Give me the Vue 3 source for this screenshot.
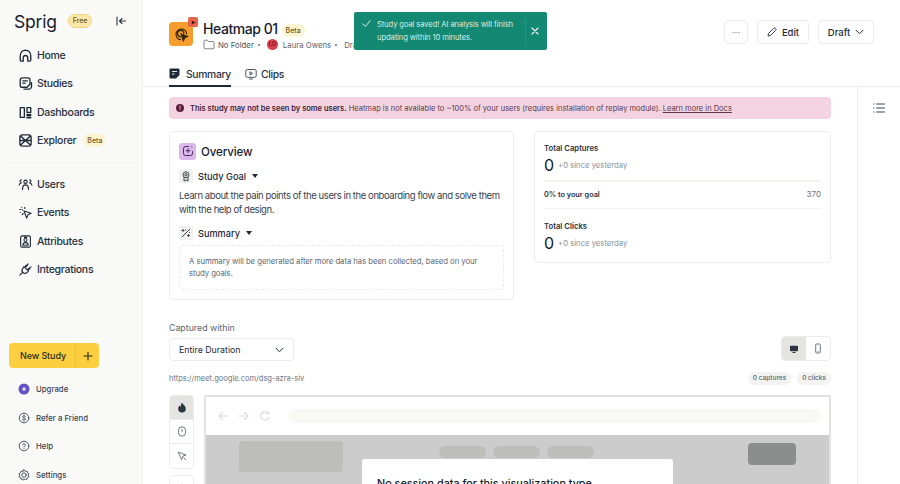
<script setup>
const topNav = [
  { label: 'Home', d: 'M3 10.500 C3 6 6 3 10 3 s7 3 7 7.500 V16 a1.500 1.500 0 0 1-1.500 1.500 H13 V13 a3 3 0 0 0-6 0 v4.500 H4.500 A1.500 1.500 0 0 1 3 16 Z' },
  { label: 'Studies', d: 'M5.500 2.500 h8 A2.500 2.500 0 0 1 16 5 V11 l-4 4 H5.500 A2.500 2.500 0 0 1 3 12.500 v-7.500 A2.500 2.500 0 0 1 5.500 2.500 Z M6.500 6.500 h6 M6.500 9.500 h3 M18 9 v5 a3.500 3.500 0 0 1-3.500 3.500 H8' },
  { label: 'Dashboards', d: 'M3 3.500 h5.500 v13 h-5.500 Z M12 3.500 h5 v6.500 h-5 Z M12 13 h5 v1 h-5 Z M12 16.500 h5 v.5 h-5 Z' },
  { label: 'Explorer', beta: true, d: 'M6 2.500 h8 a3.500 3.500 0 0 1 3.500 3.500 v8 a3.500 3.500 0 0 1-3.500 3.500 H6 a3.500 3.500 0 0 1-3.500-3.500 V6 a3.500 3.500 0 0 1 3.500-3.500 Z M3.500 4 L16.500 16 M16.500 4 L3.500 16 M3 10 h14' },
]
const midNav = [
  { label: 'Users', d: 'M10 8.500 a2.200 2.200 0 1 0 0-4.400 a2.200 2.200 0 0 0 0 4.400 Z M6 16.500 c0-3.500 1.500-6 4-6 s4 2.500 4 6 M4.500 7 a1.700 1.700 0 1 1 0-3.400 M1.500 11 c.3-1.600 1.300-2.600 2.500-2.600 M15.500 7 a1.700 1.700 0 1 0 0-3.400 M18.500 11 c-.3-1.600-1.300-2.600-2.500-2.600' },
  { label: 'Events', d: 'M8 8 L17.500 11 L13.500 13 L11.500 17.500 Z M5 3 v.1 M9 3 v1.500 M2.500 6 h1.500 M3 10 h.1 M6 6.500 h.1 M5.500 13 l1.500-1.500' },
  { label: 'Attributes', d: 'M5.500 2.500 h9 a2 2 0 0 1 2 2 v11 a2 2 0 0 1-2 2 h-9 a2 2 0 0 1-2-2 v-11 a2 2 0 0 1 2-2 Z M10 10 a2 2 0 1 0 0-4 a2 2 0 0 0 0 4 Z M6.500 15 c0-2.200 1.500-3.500 3.500-3.500 s3.500 1.300 3.500 3.500 Z M8.500 4.500 h3' },
  { label: 'Integrations', d: 'M2.500 17.500 L6.500 13.500 M8 6 L14 12 L12 14 a4 4 0 0 1-5.500 0 a4 4 0 0 1 0-5.500 Z M11 4 L9.500 7 M16 9 L13 10.500 M13.500 2.500 L11.500 6 M17.500 6.500 L14 8.500' },
]
const footNav = ['Upgrade', 'Refer a Friend', 'Help', 'Settings']
</script>

<template>
  <div class="app">
    <aside class="side">
      <div class="brand">
        <span class="logo">Sprig</span>
        <span class="free">Free</span>
        <svg class="collapse" width="12" height="12" viewBox="0 0 12 12" fill="none" stroke="#2b3440" stroke-width="1.100" stroke-linecap="round" stroke-linejoin="round"><path d="M2 2v8M10.500 6H4.500M7 3.500 4.500 6 7 8.500" /></svg>
      </div>
      <nav class="nav">
        <a v-for="item in topNav" :key="item.label" class="nav-item">
          <svg width="15" height="15" viewBox="0 0 20 20" fill="none" stroke="#1f2a37" stroke-width="1.800" stroke-linecap="round" stroke-linejoin="round"><path :d="item.d" /></svg>
          <span>{{ item.label }}</span>
          <span v-if="item.beta" class="beta">Beta</span>
        </a>
      </nav>
      <div class="side-rule"></div>
      <nav class="nav nav-mid">
        <a v-for="item in midNav" :key="item.label" class="nav-item">
          <svg width="15" height="15" viewBox="0 0 20 20" fill="none" stroke="#1f2a37" stroke-width="1.500" stroke-linecap="round" stroke-linejoin="round"><path :d="item.d" /></svg>
          <span>{{ item.label }}</span>
        </a>
      </nav>
      <div class="new-study">
        <span class="new-label">New Study</span>
        <span class="new-plus">
          <svg width="10" height="10" viewBox="0 0 10 10" stroke="#2b2a1c" stroke-width="1.100" stroke-linecap="round"><path d="M5 1v8M1 5h8" /></svg>
        </span>
      </div>
      <nav class="foot">
        <a v-for="(label, i) in footNav" :key="label" class="foot-item">
          <svg width="12" height="12" viewBox="0 0 12 12" fill="none" stroke="#39424e" stroke-width=".9" stroke-linecap="round" stroke-linejoin="round">
            <template v-if="i === 0">
              <circle cx="6" cy="6" r="5.500" fill="#6553c4" stroke="none" />
              <path d="M6 4.500v3M4.500 6h3" stroke="#fff" stroke-width="1.200" />
            </template>
            <template v-else-if="i === 1">
              <circle cx="6" cy="6" r="4.800" />
              <path d="M7.500 4.500C7.200 3.900 6.600 3.700 6 3.700c-.9 0-1.500.4-1.500 1.100C4.500 6.300 7.600 5.600 7.600 7.200c0 .7-.7 1.100-1.600 1.100-.7 0-1.300-.3-1.600-.9M6 3v6" stroke-width=".7" />
            </template>
            <template v-else-if="i === 2">
              <circle cx="6" cy="6" r="4.800" />
              <path d="M4.700 4.800C4.800 4.100 5.300 3.700 6 3.700s1.300.5 1.300 1.200C7.300 6 6 6 6 7M6 8.400v.1" />
            </template>
            <template v-else>
              <path d="M6 .9 7.200 2.300 9 2.100 9.500 3.800 11 4.800 10.200 6.300 11 7.800 9.500 8.600 9 10.300 7.200 10 6 11.200 4.800 10 3 10.300 2.500 8.600 1 7.800 1.800 6.300 1 4.800 2.500 3.800 3 2.100 4.800 2.300Z" />
              <circle cx="6" cy="6.100" r="2.200" />
            </template>
          </svg>
          <span>{{ label }}</span>
        </a>
      </nav>
    </aside>

    <main class="main">
      <div class="toast">
        <svg width="9" height="9" viewBox="0 0 10 10" fill="none" stroke="#d9efe8" stroke-width="1.100" stroke-linecap="round" stroke-linejoin="round"><path d="M1 5.500 3.800 8.300 9 1.800" /></svg>
        <p>Study goal saved! AI analysis will finish updating within 10 minutes.</p>
        <span class="toast-close">
          <svg width="8" height="8" viewBox="0 0 8 8" stroke="#fff" stroke-width="1.100" stroke-linecap="round"><path d="M1 1l6 6M7 1 1 7" /></svg>
        </span>
      </div>

      <header class="head">
        <div class="study-icon">
          <svg width="15" height="15" viewBox="0 0 16 16" fill="none" stroke="#3a2508" stroke-width="1.300" stroke-linecap="round"><path d="M7 13.500A5.700 5.700 0 1 1 13.500 7M6.800 10.500A3.400 3.400 0 1 1 10.500 6.800" /><path d="M7.500 7.500 14.500 10 11.500 11.500 10 14.500Z" fill="#3a2508" /></svg>
          <span class="rec">
            <svg width="5" height="5" viewBox="0 0 5 5"><path d="M.8.400 4.600 2.500.8 4.600Z" fill="#4a1610" /></svg>
          </span>
        </div>
        <div class="head-text">
          <div class="title-row">
            <h1>Heatmap 01</h1>
            <span class="beta beta-title">Beta</span>
          </div>
          <div class="meta">
            <svg width="12" height="11" viewBox="0 0 12 11" fill="none" stroke="#5b6470" stroke-width=".8" stroke-linejoin="round"><path d="M1 2.200A1 1 0 0 1 2 1.200h2.300l1.200 1.300H10a1 1 0 0 1 1 1v5.300a1 1 0 0 1-1 1H2a1 1 0 0 1-1-1Z" /></svg>
            <span class="folder">No Folder</span>
            <i class="dot"></i>
            <span class="avatar">LO</span>
            <span>Laura Owens</span>
            <i class="dot"></i>
            <span>Draft</span>
          </div>
        </div>
        <div class="actions">
          <button class="btn btn-more">
            <svg width="8" height="3" viewBox="0 0 8 3" fill="#4b5563"><circle cx="1" cy="1.500" r=".6" /><circle cx="4" cy="1.500" r=".6" /><circle cx="7" cy="1.500" r=".6" /></svg>
          </button>
          <button class="btn btn-edit">
            <svg width="10" height="10" viewBox="0 0 10 10" fill="none" stroke="#1f2a37" stroke-width=".9" stroke-linejoin="round"><path d="M1 9 1.500 6.500 6.800 1.200a1 1 0 0 1 1.400 0l.6.600a1 1 0 0 1 0 1.400L3.500 8.500Z" /></svg>
            Edit
          </button>
          <button class="btn btn-draft">
            Draft
            <svg width="9" height="6" viewBox="0 0 9 6" fill="none" stroke="#1f2a37" stroke-width="1" stroke-linecap="round" stroke-linejoin="round"><path d="M1 1.200 4.500 4.800 8 1.200" /></svg>
          </button>
        </div>
      </header>

      <div class="tabs">
        <a class="tab tab-on">
          <svg width="11" height="11" viewBox="0 0 11 11"><path d="M1.500.500h8a1 1 0 0 1 1 1v5.500L7 10.500H1.500a1 1 0 0 1-1-1v-8a1 1 0 0 1 1-1Z" fill="#1f2a37" /><path d="M3 3.500h5M3 6h2.500" stroke="#fff" stroke-width=".9" /></svg>
          Summary
        </a>
        <a class="tab">
          <svg width="12" height="12" viewBox="0 0 12 12" fill="none" stroke="#39424e" stroke-width=".9" stroke-linejoin="round"><rect x=".8" y="1.500" width="10.400" height="7.800" rx="1.500" /><path d="M5 3.800 7.600 5.400 5 7Z" /><path d="M4 11h4" /></svg>
          Clips
        </a>
      </div>

      <div class="body">
        <div class="content">
          <div class="banner">
            <svg width="8" height="8" viewBox="0 0 8 8"><circle cx="4" cy="4" r="4" fill="#5b1f40" /><path d="M4 2v2.400M4 5.800v.1" stroke="#f3d3df" stroke-width=".9" stroke-linecap="round" /></svg>
            <p><b>This study may not be seen by some users.</b> Heatmap is not available to ~100% of your users (requires installation of replay module). <u>Learn more in Docs</u></p>
          </div>

          <div class="cards">
            <section class="card overview">
              <div class="ov-head">
                <span class="ov-icon">
                  <svg width="12" height="12" viewBox="0 0 12 12" fill="none" stroke="#4a2a66" stroke-width="1" stroke-linecap="round"><path d="M10.500 6.500v2a2 2 0 0 1-2 2h-5a2 2 0 0 1-2-2v-5a2 2 0 0 1 2-2h3" /><path d="M6 4v3.500M4.200 5.700h3.600M9.800 1.800v.1" /></svg>
                </span>
                <h2>Overview</h2>
              </div>
              <div class="sub-head">
                <span class="sub-icon">
                  <svg width="10" height="11" viewBox="0 0 10 11" fill="none" stroke="#2b3440" stroke-width=".9"><circle cx="5" cy="3.800" r="3" /><circle cx="5" cy="3.800" r="1.200" /><path d="M3 6.500V10l2-1 2 1V6.500" /></svg>
                </span>
                <span>Study Goal</span>
                <i class="caret"></i>
              </div>
              <p class="goal">Learn about the pain points of the users in the onboarding flow and solve them with the help of design.</p>
              <div class="sub-head sub-summary">
                <span class="sub-icon">
                  <svg width="10" height="10" viewBox="0 0 10 10" fill="none" stroke="#2b3440" stroke-width=".9" stroke-linecap="round"><path d="M1.200 8.800 8.800 1.200M2 1.500v2M1 2.500h2M7.500 6.500v2M6.500 7.500h2M4.500 2h.1M8.500 4.500h.1" /></svg>
                </span>
                <span>Summary</span>
                <i class="caret"></i>
              </div>
              <p class="summary-box">A summary will be generated after more data has been collected, based on your study goals.</p>
            </section>

            <section class="card stats">
              <div class="stat">
                <h3>Total Captures</h3>
                <div class="stat-row"><strong>0</strong><span>+0 since yesterday</span></div>
              </div>
              <div class="goal-row">
                <b>0% to your goal</b>
                <span>370</span>
              </div>
              <div class="stat stat-clicks">
                <h3>Total Clicks</h3>
                <div class="stat-row"><strong>0</strong><span>+0 since yesterday</span></div>
              </div>
            </section>
          </div>

          <div class="range">
            <div>
              <label>Captured within</label>
              <div class="select">
                <span>Entire Duration</span>
                <svg width="9" height="6" viewBox="0 0 9 6" fill="none" stroke="#1f2a37" stroke-width="1" stroke-linecap="round" stroke-linejoin="round"><path d="M1 1.200 4.500 4.800 8 1.200" /></svg>
              </div>
            </div>
            <div class="device">
              <span class="device-btn device-on">
                <svg width="10" height="10" viewBox="0 0 10 10"><rect x="1" y="1.800" width="8" height="5.400" rx=".8" fill="#2b3440" /><path d="M3.500 8.500h3" stroke="#2b3440" stroke-width="1" /></svg>
              </span>
              <span class="device-btn">
                <svg width="10" height="11" viewBox="0 0 10 11" fill="none" stroke="#4b5563" stroke-width=".8"><rect x="2.700" y="1" width="4.600" height="9" rx="1" /><path d="M4.500 8.600h1" /></svg>
              </span>
            </div>
          </div>

          <div class="url-row">
            <span class="url">https://meet.google.com/dsg-azra-siv</span>
            <span class="pill">0 captures</span>
            <span class="pill">0 clicks</span>
          </div>

          <div class="viewer">
            <div class="tools">
              <div class="tool-group">
                <span class="tool tool-on">
                  <svg width="10" height="11" viewBox="0 0 10 11"><path d="M5 .500C5.400 2.200 8.800 3.600 8.800 6.700A3.800 3.800 0 0 1 1.200 6.700C1.200 5.200 2 4.200 2.800 3.500 3 4.300 3.400 4.700 3.800 4.800 3.800 3 4.200 1.500 5 .500Z" fill="#2b3440" /></svg>
                </span>
                <span class="tool">
                  <svg width="10" height="11" viewBox="0 0 10 11" fill="none" stroke="#4b5563" stroke-width=".8"><rect x="1.500" y=".8" width="7" height="9.400" rx="3.500" /><path d="M5 3v3" /></svg>
                </span>
                <span class="tool">
                  <svg width="10" height="10" viewBox="0 0 10 10" fill="none" stroke="#4b5563" stroke-width=".8" stroke-linejoin="round"><path d="M1.200 1.200 8.800 4 5.800 5.200 4.600 8.500Z" /><path d="M6.500 6.500 9 9" /></svg>
                </span>
              </div>
              <div class="tool-group">
                <span class="tool">
                  <svg width="10" height="10" viewBox="0 0 10 10" fill="none" stroke="#4b5563" stroke-width=".8"><circle cx="5" cy="5" r="3.800" /></svg>
                </span>
              </div>
            </div>
            <div class="preview">
              <div class="chrome">
                <svg width="54" height="12" viewBox="0 0 54 12" fill="none" stroke="#dcdcd9" stroke-width="1.100" stroke-linecap="round" stroke-linejoin="round"><path d="M9.500 6H1M4.500 2.500 1 6l3.500 3.500M21.500 6H30M26.500 2.500 30 6l-3.500 3.500M50 3.200A4.200 4.200 0 1 0 51 7M50.500 1v2.800h-2.800" /></svg>
                <span class="address"></span>
              </div>
              <div class="stage">
                <div class="skeleton">
                  <span class="sk-logo"></span>
                  <span class="sk-links"><i></i><i></i><i></i></span>
                  <span class="sk-cta"></span>
                </div>
                <div class="empty-card">No session data for this visualization type</div>
              </div>
            </div>
          </div>
        </div>
        <div class="rail">
          <svg width="12" height="10" viewBox="0 0 12 10" stroke="#3a4450" stroke-width="1" stroke-linecap="round"><path d="M3.500 1h8M3.500 5h8M3.500 9h8M.6 1h.4M.6 5h.4M.6 9h.4" /></svg>
        </div>
      </div>
    </main>
  </div>
</template>

<style>
html, body { margin: 0; overflow: hidden; }
</style>

<style scoped>
* { box-sizing: border-box; }
h1, h2, h3, p { margin: 0; }
svg { display: block; flex: none; }

.app {
  display: flex;
  width: 900px;
  height: 484px;
  overflow: hidden;
  background: #fff;
  color: #1f2a37;
  font-family: Inter, "Liberation Sans", sans-serif;
}

.side {
  flex: 0 0 143px;
  display: flex;
  flex-direction: column;
  overflow: hidden;
  background: #f9f9f8;
  border-right: 1px solid #efefed;
}
.side > * { flex: none; }
.brand {
  display: flex;
  align-items: center;
  height: 28px;
  margin-top: 7px;
  padding-left: 14px;
}
.logo {
  width: 54px;
  font-size: 17.500px;
  font-weight: 400;
  letter-spacing: -.2px;
  color: #16202c;
}
.free {
  width: 24px;
  height: 14px;
  border-radius: 7px;
  background: #fce7a8;
  border: 1px solid #f5d67e;
  color: #6b5a1f;
  font-size: 7px;
  font-weight: 500;
  line-height: 12px;
  text-align: center;
}
.collapse { margin-left: 23px; }
.nav {
  display: flex;
  flex-direction: column;
  padding: 6px 0 7px 18px;
}
.nav-mid { padding-top: 7px; padding-bottom: 6px; }
.nav-item {
  display: flex;
  align-items: center;
  flex: none;
  height: 28.500px;
  font-size: 10.500px;
  font-weight: 500;
  letter-spacing: -.3px;
  color: #27313e;
}
.nav-item svg { margin-right: 4px; }
.beta {
  margin-left: 7px;
  width: 23px;
  height: 13px;
  border-radius: 7px;
  background: #fdf3d0;
  color: #6b5a1f;
  font-size: 7px;
  font-weight: 500;
  letter-spacing: 0;
  line-height: 13px;
  text-align: center;
}
.side-rule {
  height: 1px;
  margin: 0 9px;
  background: #f0f0ee;
}
.new-study {
  display: flex;
  align-items: center;
  width: 90px;
  height: 25px;
  margin: 53px 0 0 9px;
  border-radius: 4px;
  background: #fbcf3f;
  color: #2b2a1c;
  font-size: 9px;
  font-weight: 500;
  letter-spacing: -.1px;
}
.new-label { flex: 1; padding-left: 11px; }
.new-plus {
  display: flex;
  align-items: center;
  justify-content: center;
  width: 24px;
  height: 100%;
  border-left: 1px solid #f0c230;
}
.foot {
  display: flex;
  flex-direction: column;
  padding: 7px 0 0 18px;
}
.foot-item {
  display: flex;
  align-items: center;
  gap: 6px;
  flex: none;
  height: 28.500px;
  font-size: 7.800px;
  font-weight: 500;
  color: #39424e;
}

.main {
  position: relative;
  flex: 1;
  min-width: 0;
  display: flex;
  flex-direction: column;
}
.toast {
  position: absolute;
  top: 12px;
  left: 211px;
  z-index: 5;
  display: flex;
  width: 193px;
  height: 38px;
  padding-left: 8px;
  border-radius: 2px;
  background: #138872;
  color: #d9efe8;
  font-size: 7.600px;
  letter-spacing: -.1px;
  line-height: 12.500px;
}
.toast > svg { margin: 7px 6px 0 0; }
.toast p { flex: 1; padding-top: 7px; }
.toast-close {
  display: flex;
  align-items: center;
  justify-content: center;
  flex: 0 0 22px;
  margin: 5px 0;
  padding-right: 4px;
  border-left: 1px solid #2a9480;
}

.head {
  display: flex;
  flex: none;
  height: 62px;
  padding: 17px 26px 0;
}
.study-icon {
  position: relative;
  display: flex;
  align-items: center;
  justify-content: center;
  width: 24px;
  height: 24px;
  margin-top: 5px;
  border-radius: 4px;
  background: #f59e2e;
}
.rec {
  position: absolute;
  top: -5px;
  right: -5px;
  display: flex;
  align-items: center;
  justify-content: center;
  width: 10px;
  height: 10px;
  border-radius: 2px;
  background: #e8634e;
}
.head-text { margin-left: 10px; }
.title-row {
  display: flex;
  align-items: center;
  gap: 4px;
  height: 22px;
}
h1 {
  font-size: 14px;
  font-weight: 500;
  letter-spacing: -.45px;
  color: #16202c;
}
.beta-title { margin-left: 0; margin-top: 4px; }
.meta {
  display: flex;
  align-items: center;
  height: 11px;
  font-size: 7.800px;
  color: #5b6470;
}
.folder { margin-left: 3px; color: #4b5563; }
.dot {
  width: 2px;
  height: 2px;
  margin: 0 7px 0 4px;
  border-radius: 50%;
  background: #6b7280;
}
.avatar {
  width: 11px;
  height: 11px;
  margin-right: 5px;
  border-radius: 50%;
  background: #d9414f;
  color: #5a0f18;
  font-size: 5.500px;
  font-weight: 500;
  line-height: 11px;
  text-align: center;
}
.actions {
  display: flex;
  gap: 9px;
  margin-left: auto;
  padding-top: 3px;
}
.btn {
  display: flex;
  align-items: center;
  justify-content: center;
  height: 24px;
  padding: 0;
  border: 1px solid #ececea;
  border-radius: 4px;
  background: #fff;
  color: #1f2a37;
  font: 500 9.500px Inter, "Liberation Sans", sans-serif;
}
.btn-more { width: 24px; }
.btn-edit { width: 52px; gap: 5px; }
.btn-draft { width: 56px; gap: 5px; }

.tabs {
  display: flex;
  flex: none;
  gap: 14px;
  height: 25px;
  padding-left: 26px;
  border-bottom: 1px solid #ececea;
}
.tab {
  display: flex;
  align-items: center;
  gap: 4px;
  height: 25px;
  padding-bottom: 1px;
  font-size: 10.300px;
  font-weight: 500;
  letter-spacing: -.3px;
  color: #27313e;
}
.tab-on { border-bottom: 2px solid #1f2a37; padding-top: 1px; }
.tab-on svg { margin-right: 2px; }

.body { flex: 1; min-height: 0; display: flex; }
.content {
  flex: 0 0 714px;
  padding: 10px 26px 0;
}
.rail {
  flex: 1;
  padding: 16px 0 0 15px;
  border-left: 1px solid #ececea;
}
.banner {
  display: flex;
  align-items: center;
  gap: 6px;
  height: 22px;
  padding-left: 7px;
  border-radius: 4px;
  background: #f3d3df;
  color: #5b3a4c;
  font-size: 7.500px;
}
.banner b { font-weight: 600; color: #40233a; }

.cards {
  display: flex;
  align-items: flex-start;
  gap: 20px;
  margin-top: 12px;
}
.card {
  border: 1px solid #ececea;
  border-radius: 4px;
}
.overview {
  width: 345px;
  height: 169px;
  padding: 10px 9px 0;
}
.ov-head { display: flex; align-items: center; gap: 5px; height: 18px; }
.ov-icon {
  display: flex;
  align-items: center;
  justify-content: center;
  width: 17px;
  height: 17px;
  border-radius: 3px;
  background: #d9b8ea;
}
h2 { padding-top: 1px; font-size: 11.500px; font-weight: 500; letter-spacing: -.1px; color: #16202c; }
.sub-head {
  display: flex;
  align-items: center;
  gap: 5px;
  height: 14px;
  margin-top: 9px;
  font-size: 9.200px;
  font-weight: 500;
}
.sub-icon {
  display: flex;
  align-items: center;
  justify-content: center;
  width: 14px;
  height: 14px;
  border-radius: 2px;
  background: #f0f0ee;
}
.caret {
  width: 0;
  height: 0;
  margin-left: 1px;
  border-left: 3.500px solid transparent;
  border-right: 3.500px solid transparent;
  border-top: 4px solid #1f2a37;
}
.goal {
  margin-top: 6px;
  font-size: 9.500px;
  letter-spacing: -.42px;
  line-height: 14px;
  color: #39424e;
}
.sub-summary { margin-top: 9px; }
.summary-box {
  height: 45px;
  margin: 5px 0 0;
  padding: 10px 9px 0;
  border: 1px dashed #ececea;
  border-radius: 3px;
  font-size: 7.700px;
  letter-spacing: -.03px;
  line-height: 12px;
  color: #5b6470;
}
.stats {
  width: 297px;
  height: 132px;
  padding: 0 9px;
}
.stat { height: 50px; padding-top: 11px; border-bottom: 2px solid #f1f1ef; }
.stat h3 { font-size: 7.700px; font-weight: 600; line-height: 11px; color: #27313e; }
.stat-row { display: flex; align-items: center; gap: 4px; height: 20px; margin-top: 1px; }
.stat-row strong { font-size: 16px; font-weight: 400; color: #111827; }
.stat-row span { font-size: 7.700px; color: #8a9099; }
.goal-row {
  display: flex;
  justify-content: space-between;
  align-items: center;
  height: 27px;
  padding-bottom: 2px;
  border-bottom: 1px solid #f1f1ef;
  font-size: 7.300px;
}
.goal-row b { font-weight: 600; color: #27313e; }
.goal-row span { color: #6b7280; font-size: 8px; }
.stat-clicks { border: 0; padding-top: 12px; }

.range {
  display: flex;
  justify-content: space-between;
  align-items: flex-end;
  margin-top: 22px;
}
.range label { display: block; font-size: 8.800px; line-height: 12px; color: #5b6470; }
.select {
  display: flex;
  align-items: center;
  justify-content: space-between;
  width: 125px;
  height: 23px;
  margin-top: 4px;
  padding: 0 9px;
  border: 1px solid #ececea;
  border-radius: 4px;
  font-size: 8.800px;
}
.device {
  display: flex;
  height: 25px;
  border: 1px solid #ececea;
  border-radius: 4px;
  overflow: hidden;
}
.device-btn {
  display: flex;
  align-items: center;
  justify-content: center;
  width: 24px;
}
.device-on { background: #e4e4e2; }

.url-row {
  display: flex;
  align-items: center;
  gap: 6px;
  height: 13px;
  margin-top: 11px;
}
.url { margin-right: auto; font-size: 7.500px; color: #6b7280; }
.pill {
  height: 13px;
  padding: 0 5px;
  border-radius: 7px;
  background: #f3f3f1;
  color: #5b6470;
  font-size: 6.500px;
  font-weight: 500;
  line-height: 13px;
}

.viewer {
  display: flex;
  gap: 10px;
  margin-top: 10px;
}
.tools { display: flex; flex-direction: column; gap: 6px; flex: 0 0 25px; }
.tool-group {
  border: 1px solid #ececea;
  border-radius: 4px;
  overflow: hidden;
}
.tool {
  display: flex;
  align-items: center;
  justify-content: center;
  height: 24px;
  border-bottom: 1px solid #ececea;
}
.tool:last-child { border-bottom: 0; }
.tool-on { background: #e4e4e2; }
.preview {
  flex: 1;
  height: 120px;
  border: 2px solid #e3e3e1;
  border-bottom: 0;
}
.chrome {
  display: flex;
  align-items: center;
  gap: 16px;
  height: 38px;
  padding: 0 8px 0 12px;
  background: #fff;
}
.address {
  flex: 1;
  height: 14px;
  border-radius: 7px;
  background: #f9f9f6;
}
.stage {
  position: relative;
  height: 80px;
  padding-top: 6px;
  background: #cccccc;
}
.skeleton {
  display: flex;
  align-items: flex-start;
  padding: 0 33px;
}
.sk-logo { width: 104px; height: 31px; border-radius: 4px; background: #bdbdb9; }
.sk-links { display: flex; gap: 7px; margin: 5px 0 0 96px; }
.sk-links i { width: 47px; height: 12px; border-radius: 6px; background: #bdbdb9; }
.sk-cta { width: 48px; height: 22px; margin: 2px 0 0 auto; border-radius: 4px; background: #8c8e8e; }
.empty-card {
  position: absolute;
  top: 24px;
  left: 156px;
  width: 311px;
  height: 60px;
  padding: 18px 15px 0;
  border-radius: 3px;
  background: #fff;
  color: #16202c;
  font-size: 10.800px;
  font-weight: 500;
}
</style>
